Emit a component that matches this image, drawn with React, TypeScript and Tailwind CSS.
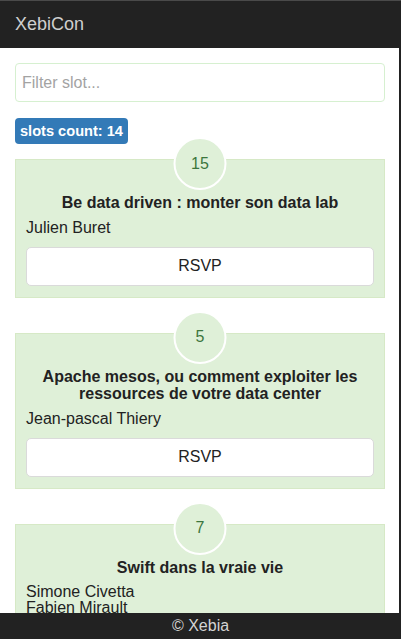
import { useState } from 'react';

type Slot = {
    id: number;
    room: number;
    title: string;
    speakers: string[];
};

const slots: Slot[] = [
    { id: 1, room: 15, title: 'Be data driven : monter son data lab', speakers: ['Julien Buret'] },
    { id: 2, room: 5, title: 'Apache mesos, ou comment exploiter les ressources de votre data center', speakers: ['Jean-pascal Thiery'] },
    { id: 3, room: 7, title: 'Swift dans la vraie vie', speakers: ['Simone Civetta', 'Fabien Mirault'] },
];

function SlotCard({ slot }: { slot: Slot }) {
    return (
        <div className="relative mb-[35px] border border-[#d6e9c6] bg-[#dff0d8] px-[10px] pt-[34px] pb-[11px]">
            {/* room bubble */}
            <div className="absolute left-1/2 top-[-23px] flex h-[53px] w-[53px] -translate-x-1/2 items-center justify-center rounded-full border-2 border-white bg-[#dff0d8] text-[16px] text-[#3c763d]">
                {slot.room}
            </div>
            <h3 className="mb-[8px] text-center text-[16px] font-bold leading-[1.1] text-[#222]">
                {slot.title}
            </h3>
            <div className="text-[16px] leading-[16px] text-[#222]">
                {slot.speakers.map(name => (
                    <div key={name}>{name}</div>
                ))}
            </div>
            <button className="mt-[11px] h-[39px] w-full rounded-[5px] border border-[#dadada] bg-white text-[16px] text-[#222]">
                RSVP
            </button>
        </div>
    );
}

export default function App() {
    const [filter, setFilter] = useState('');

    const visible = slots.filter(s =>
        s.title.toLowerCase().includes(filter.toLowerCase())
    );

    return (
        <div className="flex h-[639px] w-[401px] flex-col overflow-hidden bg-white font-['Liberation_Sans',Arial,sans-serif]">
            {/* Navbar */}
            <div className="flex h-[48px] shrink-0 items-center border-t border-[#4a4a4a] bg-[#222] px-[15px]">
                <span className="text-[18px] text-[#cfcfcf]">XebiCon</span>
            </div>

            <div className="flex min-h-0 flex-1">
                <main className="min-w-0 flex-1 overflow-hidden pl-[15px] pr-[14px] pt-[15px]">
                    <input
                        type="text"
                        className="h-[39px] w-full rounded-[4px] border border-[#d6f0d0] px-[6px] text-[16px] text-[#333] placeholder-[#a3a3a3] focus:outline-none"
                        placeholder="Filter slot..."
                        value={filter}
                        onChange={(e) => setFilter(e.target.value)}
                    />

                    <div className="mt-[16px] mb-[15px] inline-block h-[26px] rounded-[4px] bg-[#337ab7] px-[5px] text-[14.6px] font-bold leading-[26px] text-white">
                        slots count: 14
                    </div>

                    <div>
                        {visible.map(slot => (
                            <SlotCard key={slot.id} slot={slot} />
                        ))}
                    </div>
                </main>
                <div className="w-[2px] shrink-0 bg-[#222]" />
            </div>

            {/* Footer */}
            <div className="flex h-[26px] shrink-0 items-center justify-center bg-[#222] text-[16px] text-[#d4d4d4]">
                © Xebia
            </div>
        </div>
    );
}
